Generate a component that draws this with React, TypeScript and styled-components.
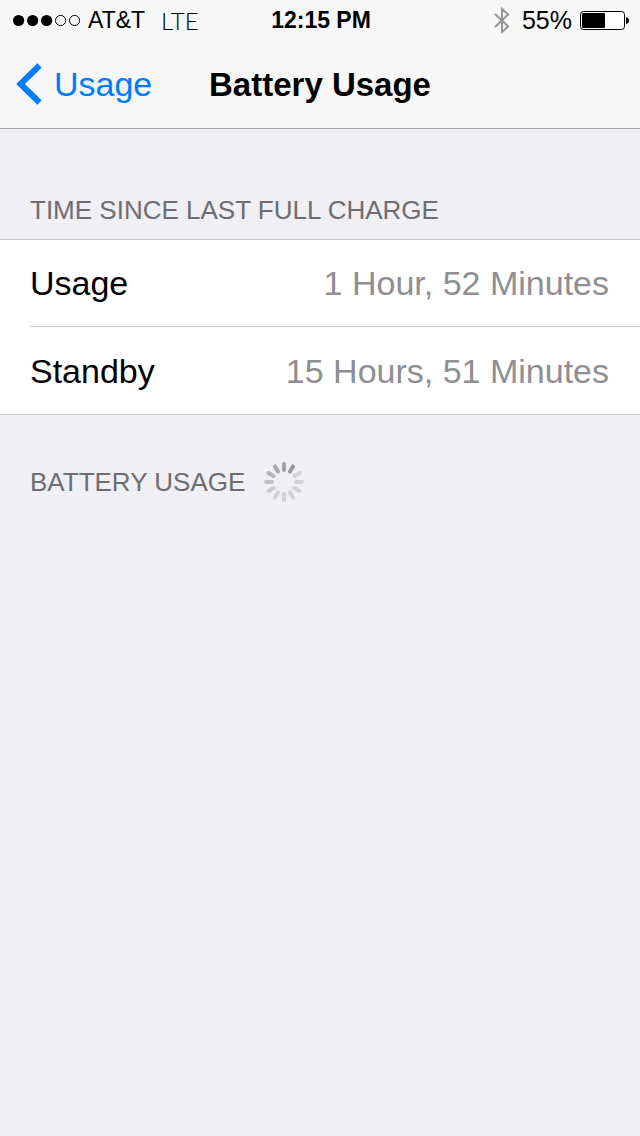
import React from 'react';
import styled, { createGlobalStyle } from 'styled-components';

const GlobalStyle = createGlobalStyle`
  *, *::before, *::after { box-sizing: border-box; }
  body {
    margin: 0;
    background: #efeff4;
    color: #000;
    font-family: "Liberation Sans", Arial, sans-serif;
  }
`;

const Screen = styled.div`
  min-height: 100vh;
`;

const TopBar = styled.header`
  background: #f7f7f7;
  border-bottom: 1px solid #a7a7ac;
`;

const StatusBar = styled.div`
  display: grid;
  grid-template-columns: 1fr auto 1fr;
  align-items: center;
  height: 41px;
  padding: 0 11px 0 13px;
  font-size: 24px;
  line-height: 41px;
`;

const StatusGroup = styled.div<{ $end?: boolean }>`
  display: flex;
  align-items: center;
  justify-content: ${(p) => (p.$end ? 'flex-end' : 'flex-start')};
  gap: 8px;
`;

const Carrier = styled.span`
  font-size: 23px;
`;

const Network = styled.span`
  padding-left: 8px;
  font-family: Lato, "Liberation Sans", sans-serif;
  font-weight: 300;
  font-size: 24px;
`;

const Clock = styled.time`
  font-size: 23px;
  font-weight: 700;
`;

const Percent = styled.span`
  padding-left: 4px;
  font-size: 25px;
`;

const Drawing = styled.svg`
  display: block;
  flex: none;
`;

const NavBar = styled.nav`
  display: grid;
  grid-template-columns: 1fr auto 1fr;
  align-items: center;
  height: 87px;
  padding: 0 16px;
`;

const BackLink = styled.a`
  display: flex;
  align-items: center;
  gap: 12px;
  color: #007aff;
  font-size: 34px;
  line-height: 39px;
  text-decoration: none;
`;

const Title = styled.h1`
  margin: 0;
  font-size: 33px;
  font-weight: 700;
  line-height: 40px;
`;

const SectionHeader = styled.div<{ $top: number }>`
  display: flex;
  align-items: center;
  gap: 19px;
  padding: ${(p) => p.$top}px 30px 9px;
`;

const SectionTitle = styled.h2`
  margin: 0;
  color: #6d6d72;
  font-size: 26px;
  font-weight: 400;
  line-height: 40px;
`;

const List = styled.dl`
  margin: 0;
  padding-left: 30px;
  background: #fff;
  border: solid #c8c7cc;
  border-width: 1px 0;
`;

const Row = styled.div`
  display: flex;
  align-items: center;
  justify-content: space-between;
  height: 86px;
  padding-right: 31px;
  font-size: 34px;
  line-height: 40px;

  & + & {
    height: 88px;
    border-top: 1px solid #c8c7cc;
  }
`;

const Label = styled.dt`
  margin: 0;
`;

const Value = styled.dd`
  margin: 0;
  color: #8e8e93;
`;

const SignalDots = () => (
  <Drawing width="67" height="13" viewBox="0 0 67 13" role="img" aria-label="Signal strength 3 of 5">
    {[0, 1, 2, 3, 4].map((i) =>
      i < 3 ? (
        <circle key={i} cx={5.6 + i * 14} cy="6.5" r="5.6" />
      ) : (
        <circle key={i} cx={5.6 + i * 14} cy="6.5" r="5.1" fill="none" stroke="#000" />
      ),
    )}
  </Drawing>
);

const Bluetooth = () => (
  <Drawing width="16" height="27" viewBox="0 0 16 27" role="img" aria-label="Bluetooth">
    <path d="M1 7 14.2 19.500 8 25V2l6.200 5.500L1 20" fill="none" stroke="#959595" strokeWidth="2" />
  </Drawing>
);

const Battery = () => (
  <Drawing width="49" height="19" viewBox="0 0 49 19" role="img" aria-label="Battery">
    <rect x=".5" y=".5" width="44" height="18" rx="3" fill="#fff" stroke="#000" />
    <rect x="2" y="2" width="23" height="15" rx="1" />
    <path d="M46 6c4 .5 4 6.500 0 7z" />
  </Drawing>
);

const BackChevron = () => (
  <Drawing width="26" height="43" viewBox="0 0 26 43" aria-hidden="true">
    <path d="M23.500 2.500 4.500 21l19 18.500" fill="none" stroke="#007aff" strokeWidth="6" />
  </Drawing>
);

const spokes = [
  '#a1a1a4', '#979799', '#d3d3d7', '#d3d3d7', '#d3d3d7', '#d3d3d7',
  '#d3d3d7', '#d3d3d7', '#cdcdd1', '#c0c0c3', '#b4b4b7', '#ababae',
];

const Spinner = () => (
  <Drawing width="40" height="40" viewBox="-20 -20 40 40" role="img" aria-label="Loading">
    {spokes.map((color, i) => (
      <rect key={i} x="-2" y="-20" width="4" height="10" rx="2" fill={color} transform={`rotate(${i * 30})`} />
    ))}
  </Drawing>
);

const times = [
  { label: 'Usage', value: '1 Hour, 52 Minutes' },
  { label: 'Standby', value: '15 Hours, 51 Minutes' },
];

export default function App() {
  return (
    <Screen>
      <GlobalStyle />
      <TopBar>
        <StatusBar>
          <StatusGroup>
            <SignalDots />
            <Carrier>AT&amp;T</Carrier>
            <Network>LTE</Network>
          </StatusGroup>
          <Clock>12:15 PM</Clock>
          <StatusGroup $end>
            <Bluetooth />
            <Percent>55%</Percent>
            <Battery />
          </StatusGroup>
        </StatusBar>
        <NavBar>
          <BackLink href="#usage">
            <BackChevron />
            Usage
          </BackLink>
          <Title>Battery Usage</Title>
        </NavBar>
      </TopBar>
      <main>
        <SectionHeader $top={61}>
          <SectionTitle>TIME SINCE LAST FULL CHARGE</SectionTitle>
        </SectionHeader>
        <List>
          {times.map((t) => (
            <Row key={t.label}>
              <Label>{t.label}</Label>
              <Value>{t.value}</Value>
            </Row>
          ))}
        </List>
        <SectionHeader $top={47}>
          <SectionTitle>BATTERY USAGE</SectionTitle>
          <Spinner />
        </SectionHeader>
      </main>
    </Screen>
  );
}
